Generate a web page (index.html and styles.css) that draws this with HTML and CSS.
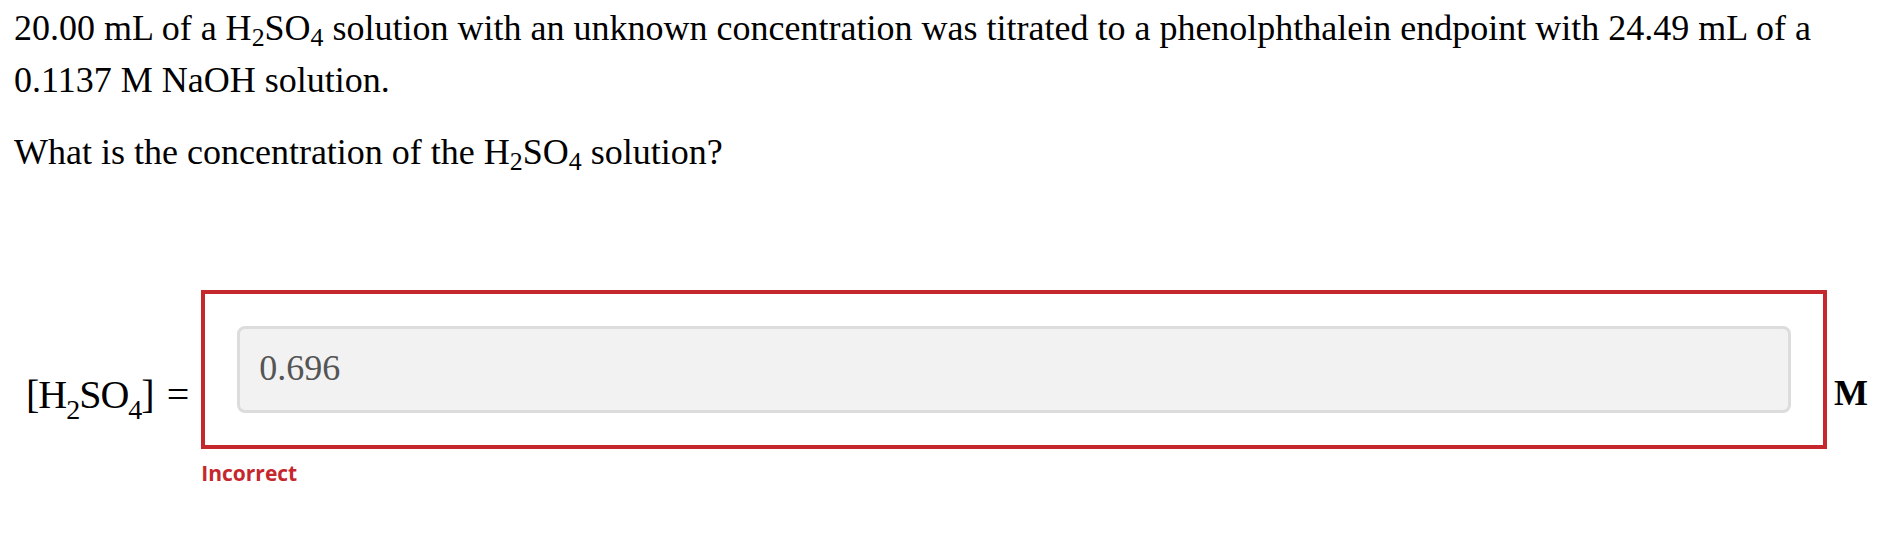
FILE: index.html
```html
<!DOCTYPE html>
<html>
<head>
<meta charset="utf-8">
<link rel="stylesheet" href="styles.css">
</head>
<body>
<div class="question">
  <p class="para first">20.00 mL of a H<sub>2</sub>SO<sub>4</sub> solution with an unknown concentration was titrated to a phenolphthalein endpoint with 24.49 mL of a 0.1137 M NaOH solution.</p>
  <p class="para">What is the concentration of the H<sub>2</sub>SO<sub>4</sub> solution?</p>
</div>
<div class="answer">
  <div class="label">[H<sub>2</sub>SO<sub>4</sub>]<span class="eq">=</span></div>
  <div class="field">
    <div class="box">
      <div class="input">0.696</div>
    </div>
    <div class="feedback">Incorrect</div>
  </div>
  <div class="unit">M</div>
</div>
</body>
</html>
```
FILE: styles.css
```css
html, body {
  margin: 0;
  padding: 0;
  background: #ffffff;
}
body {
  font-family: "Liberation Serif", "Times New Roman", serif;
  color: #000000;
}
.question {
  padding: 2px 60px 0 14px;
}
.para {
  margin: 0 0 20px 0;
  font-size: 36px;
  line-height: 52px;
}
.para sub {
  font-size: 0.72em;
  vertical-align: -0.24em;
  line-height: 0;
}
.answer {
  display: flex;
  align-items: flex-start;
  margin-top: 112px;
  padding: 0 24px 0 26px;
}
.label {
  font-size: 40px;
  line-height: 40px;
  letter-spacing: -1px;
  padding-top: 85px;
  margin-right: 13px;
  white-space: nowrap;
}
.label sub {
  font-size: 0.7em;
  vertical-align: -0.4em;
  line-height: 0;
}
.eq {
  margin-left: 13px;
}
.field {
  flex: 1;
  display: flex;
  flex-direction: column;
}
.box {
  border: 4px solid #c5282c;
  padding: 32px;
}
.input {
  height: 87px;
  box-sizing: border-box;
  border: 3px solid #dcdcdc;
  border-radius: 8px;
  background: #f2f2f2;
  display: flex;
  align-items: center;
  padding: 0 19px 4px 19px;
  font-size: 36px;
  color: #555555;
}
.feedback {
  margin-top: 10px;
  font-family: "Open Sans", sans-serif;
  font-weight: 700;
  font-size: 21px;
  color: #c5282c;
}
.unit {
  font-size: 36px;
  line-height: 36px;
  font-weight: bold;
  padding-top: 85px;
  margin-left: 7px;
}
```
